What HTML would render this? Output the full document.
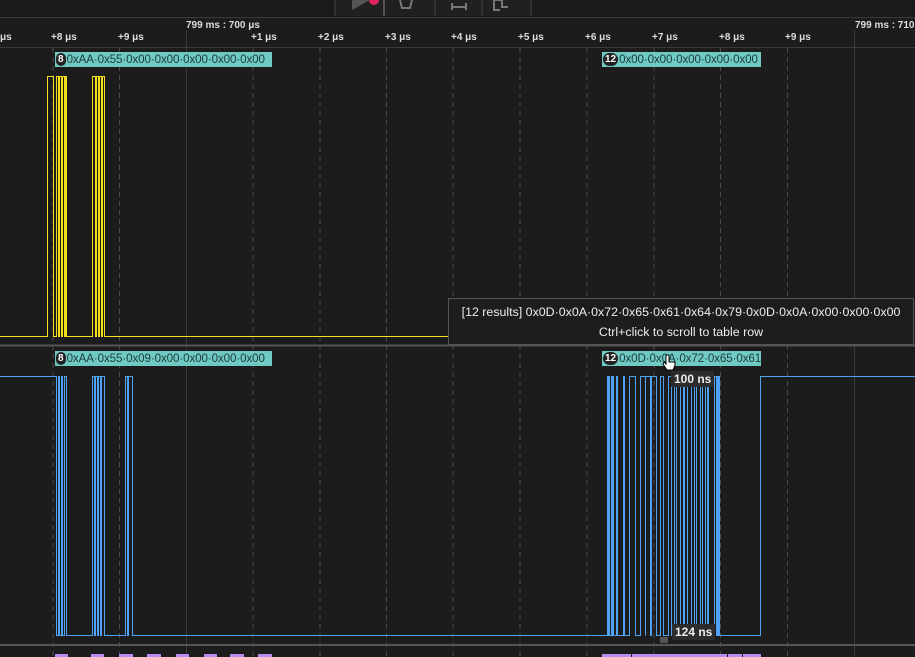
<!DOCTYPE html>
<html><head><meta charset="utf-8"><style>
body{margin:0;width:915px;height:657px;background:#1c1c1c;overflow:hidden;font-family:"Liberation Sans",sans-serif;position:relative}
.t{position:absolute;color:#ddd;font-size:10px;font-weight:bold;white-space:nowrap}
.lab{position:absolute;height:15px;background:#6fcac4;color:#1e3b3a;font-size:11.6px;letter-spacing:-0.1px;line-height:15px;white-space:nowrap;overflow:hidden}
.lab b{display:inline-block;background:#222;color:#fff;font-size:10px;border-radius:7px;height:13px;line-height:13px;margin:1px 1px 0 1px;padding:0 2px;vertical-align:top;letter-spacing:0}
.tip{position:absolute;left:448px;top:298px;width:466px;height:47px;background:#1d1d1d;border:1px solid #555;color:#eee;font-size:12.4px;text-align:center;line-height:20px;padding-top:3px;box-sizing:border-box}
.ns{position:absolute;background:#2c2c2c;color:#eee;font-size:12px;font-weight:bold;padding:0 3px;line-height:16px}
</style></head><body>
<svg width="915" height="657" style="position:absolute;left:0;top:0">
<rect x="0" y="0" width="915" height="17" fill="#1a1a1a"/>
<line x1="0" y1="17.5" x2="915" y2="17.5" stroke="#3a3a3a"/>
<rect x="335" y="0" width="196" height="16" fill="#202020"/>
<g stroke="#444"><line x1="335" y1="0" x2="335" y2="16"/><line x1="384" y1="0" x2="384" y2="16" stroke="#555" stroke-width="2"/><line x1="435" y1="0" x2="435" y2="16"/><line x1="482" y1="0" x2="482" y2="16"/><line x1="531" y1="0" x2="531" y2="16"/></g>
<path d="M352 0 L370 0 L352 10 Z" fill="#555"/><circle cx="374" cy="0" r="5" fill="#e0245e"/>
<g stroke="#777" stroke-width="2" fill="none"><path d="M400 0 L402 8 L410 8 L412 0"/><path d="M452 3 V10 M466 3 V10 M452 7 H466"/><path d="M494 0 V10 H500 M494 0 H502 V7 H508"/></g>
<line x1="0" y1="47.5" x2="915" y2="47.5" stroke="#3a3a3a"/>
<g stroke="#4a4a4a" stroke-dasharray="5,4">
<line x1="53" y1="48" x2="53" y2="657"/><line x1="119.5" y1="48" x2="119.5" y2="657"/><line x1="253" y1="48" x2="253" y2="657"/><line x1="320" y1="48" x2="320" y2="657"/><line x1="386.5" y1="48" x2="386.5" y2="657"/><line x1="453" y1="48" x2="453" y2="657"/><line x1="520" y1="48" x2="520" y2="657"/><line x1="587" y1="48" x2="587" y2="657"/><line x1="654" y1="48" x2="654" y2="657"/><line x1="720.5" y1="48" x2="720.5" y2="657"/><line x1="787.5" y1="48" x2="787.5" y2="657"/></g>
<g stroke="#3a3a3a"><line x1="186.5" y1="30" x2="186.5" y2="657"/><line x1="854.5" y1="30" x2="854.5" y2="657"/></g>
<line x1="0" y1="345.5" x2="915" y2="345.5" stroke="#555" stroke-width="2"/>
<line x1="0" y1="645" x2="915" y2="645" stroke="#555" stroke-width="2"/>
<g stroke="#f2e01c" fill="none" stroke-width="1">
<path d="M0 336.5 H47.5 V76.5 H53.5 V336.5 H56.5 V76.5 H58.5 V336.5 H59.5 V76.5 H61.5 V336.5 H62.5 V76.5 H64.5 V336.5 H65.5 V76.5 H66.5 V336.5 H92.5 V76.5 H95.5 V336.5 H96.5 V76.5 H98.5 V336.5 H99.5 V76.5 H101.5 V336.5 H102.5 V76.5 H104.5 V336.5 H448"/></g>
<g stroke="#4ea3f5" fill="none" stroke-width="1">
<path d="M0 376.5 H56.5 V635.5 H58.5 V376.5 H59.5 V635.5 H61.5 V376.5 H62.5 V635.5 H64.5 V376.5 H66.5 V635.5 H92.5 V376.5 H94.5 V635.5 H95.5 V376.5 H97.5 V635.5 H98.5 V376.5 H100.5 V635.5 H101.5 V376.5 H104.5 V635.5 H125.5 V376.5 H127.5 V635.5 H128.5 V376.5 H132.5 V635.5 H607.5 V376.5 H609.5 V635.5 H611.5 V376.5 H613.5 V635.5 H616.5 V376.5 H617.5 V635.5 H623.5 V376.5 H624.5 V635.5 H629.5 V376.5 H635.5 V635.5 H640.5 V376.5 H645.5 V635.5 H645.5 V376.5 H650.5 V635.5 H651.5 V376.5 H656.5 V635.5 H660.5 V376.5 H663.5 V635.5 H668.5 V376.5 H671.5 V635.5 H674.5 V376.5 H676.5 V635.5 H680.5 V376.5 H683.5 V635.5 H684.5 V376.5 H687.5 V635.5 H691.5 V376.5 H694.5 V635.5 H696.5 V376.5 H700.5 V635.5 H702.5 V376.5 H705.5 V635.5 H707.5 V376.5 H708.5 V635.5 H714.5 V376.5 H716.5 V635.5 H717.5 V376.5 H719.5 V635.5 H760.5 V376.5 H915"/></g>
<g fill="#4ea3f5"><rect x="717" y="376" width="3" height="260"/><rect x="607" y="376" width="2" height="260"/><rect x="611" y="376" width="2" height="260"/></g>
<g fill="#b48cf2"><rect x="55" y="654" width="13" height="3"/><rect x="91" y="654" width="13" height="3"/><rect x="119" y="654" width="14" height="3"/><rect x="147" y="654" width="14" height="3"/><rect x="176" y="654" width="13" height="3"/><rect x="204" y="654" width="13" height="3"/><rect x="230" y="654" width="14" height="3"/><rect x="258" y="654" width="14" height="3"/><rect x="602" y="654" width="29" height="3"/><rect x="632" y="654" width="95" height="3"/><rect x="728" y="654" width="14" height="3"/><rect x="743" y="654" width="18" height="3"/></g>
<rect x="660" y="637" width="8" height="6" fill="#555"/>
</svg>
<div class="t" style="left:0;top:32px">μs</div>
<div class="t" style="left:51px;top:32px">+8 μs</div>
<div class="t" style="left:118px;top:32px">+9 μs</div>
<div class="t" style="left:186px;top:20px">799 ms : 700 μs</div>
<div class="t" style="left:251px;top:32px">+1 μs</div>
<div class="t" style="left:318px;top:32px">+2 μs</div>
<div class="t" style="left:385px;top:32px">+3 μs</div>
<div class="t" style="left:451px;top:32px">+4 μs</div>
<div class="t" style="left:518px;top:32px">+5 μs</div>
<div class="t" style="left:585px;top:32px">+6 μs</div>
<div class="t" style="left:652px;top:32px">+7 μs</div>
<div class="t" style="left:719px;top:32px">+8 μs</div>
<div class="t" style="left:785px;top:32px">+9 μs</div>
<div class="t" style="left:855px;top:20px">799 ms : 710</div>
<div class="lab" style="left:55px;top:52px;width:217px"><b>8</b>0xAA·0x55·0x00·0x00·0x00·0x00·0x00</div>
<div class="lab" style="left:602px;top:52px;width:159px"><b>12</b>0x00·0x00·0x00·0x00·0x00</div>
<div class="lab" style="left:55px;top:351px;width:217px"><b>8</b>0xAA·0x55·0x09·0x00·0x00·0x00·0x00</div>
<div class="lab" style="left:602px;top:351px;width:159px"><b>12</b>0x0D·0x0A·0x72·0x65·0x61</div>
<div class="tip">[12 results] 0x0D·0x0A·0x72·0x65·0x61·0x64·0x79·0x0D·0x0A·0x00·0x00·0x00<br>Ctrl+click to scroll to table row</div>
<div class="ns" style="left:671px;top:371px">100 ns</div>
<div class="ns" style="left:672px;top:624px">124 ns</div>
<svg width="14" height="18" style="position:absolute;left:662px;top:354px"><path d="M4 1 V10 L2 8 L1 10 L5 16 H11 L13 11 V8 H7 V1 Z" fill="#fff" stroke="#000"/></svg>
</body></html>
